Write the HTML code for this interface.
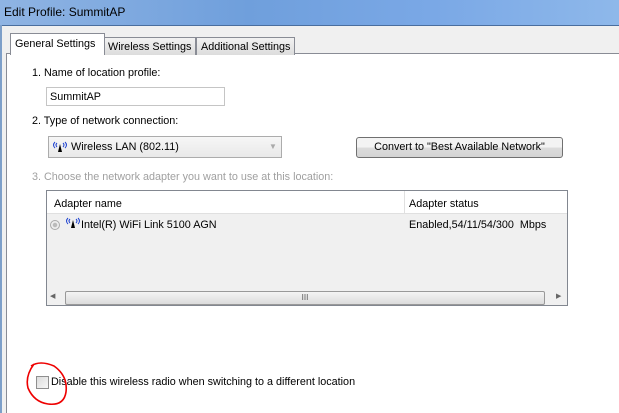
<!DOCTYPE html>
<html><head><style>
html,body{margin:0;width:619px;height:413px;overflow:hidden}
body{background:#f0f0f0;font-family:"Liberation Sans",sans-serif;font-size:10.8px;color:#000;position:relative}
.a{position:absolute;white-space:nowrap}
.title{left:0;top:0;width:619px;height:25px;background:linear-gradient(90deg,#8fb4e3,#6f9fdc 40%,#7aa8e6 70%,#8eb8ea);border-bottom:1px solid #4a6e9e}
.title span{position:absolute;left:4px;top:5px;font-size:12px}
.frame{left:0;top:25px;width:2px;height:388px;background:#7d9fc9}
.panel{left:6px;top:53px;width:620px;height:360px;background:#fff;border-left:1px solid #898c95;border-top:1px solid #898c95}
.tab{height:17px;border:1px solid #898c95;border-bottom:none;background:linear-gradient(#f2f2f2,#dcdcdc);padding:0 4px;line-height:18px}
.in{border:1px solid #c5c5c5;background:#fff}
.g{color:#a0a0a0}
</style></head><body>
<div class="a title"><span>Edit Profile: SummitAP</span></div>
<div class="a frame"></div>
<div class="a panel"></div>
<div class="a tab" style="left:103px;top:37px;width:83px">Wireless Settings</div>
<div class="a tab" style="left:196px;top:37px;width:89px">Additional Settings</div>
<div class="a tab" style="left:10px;top:33px;width:85px;height:21px;background:#fff;line-height:20px;padding-left:4px">General Settings</div>
<div class="a" style="left:32px;top:67px">1. Name of location profile:</div>
<div class="a in" style="left:46px;top:87px;width:177px;height:17px"><span style="position:absolute;left:3px;top:3px">SummitAP</span></div>
<div class="a" style="left:32px;top:115px">2. Type of network connection:</div>
<div class="a in" style="left:48px;top:136px;width:232px;height:20px;background:linear-gradient(#f6f6f6,#e9e9e9);border-color:#acacac">
<svg class="a" style="left:2px;top:3px" width="18" height="12"><path d="M4 2Q1 5 4 8M14 2Q17 5 14 8M6 3Q4 5 6 7M12 3Q14 5 12 7" stroke="#1a3fd0" fill="none" stroke-width="1"/><path d="M9 4L7 12H11Z" fill="#000"/></svg>
<span class="a" style="left:22px;top:4px">Wireless LAN (802.11)</span>
<span class="a" style="left:220px;top:5px;color:#aaa;font-size:8px">▼</span></div>
<div class="a" style="left:356px;top:137px;width:205px;height:19px;border:1px solid #707070;border-radius:3px;background:linear-gradient(#f3f3f3 50%,#dcdcdc 50%,#d4d4d4);text-align:center;line-height:19px">Convert to "Best Available Network"</div>
<div class="a g" style="left:32px;top:171px">3. Choose the network adapter you want to use at this location:</div>
<div class="a" style="left:46px;top:190px;width:520px;height:114px;border:1px solid #828790;background:#f0f0f0">
<div class="a" style="left:0;top:0;width:520px;height:22px;background:#fff;border-bottom:1px solid #e0e0e0"></div>
<div class="a" style="left:357px;top:0;width:1px;height:22px;background:#e0e0e0"></div>
<span class="a" style="left:7px;top:7px">Adapter name</span>
<span class="a" style="left:362px;top:7px">Adapter status</span>
<div class="a" style="left:3px;top:29px;width:8px;height:8px;border:1px solid #aaa;border-radius:50%;background:radial-gradient(#bbb 35%,#eee 45%)"></div>
<svg class="a" style="left:17px;top:25px" width="18" height="12"><path d="M4 2Q1 5 4 8M14 2Q17 5 14 8M6 3Q4 5 6 7M12 3Q14 5 12 7" stroke="#1a3fd0" fill="none"/><path d="M9 4L7 12H11Z" fill="#000"/></svg>
<span class="a" style="left:34px;top:28px">Intel(R) WiFi Link 5100 AGN</span>
<span class="a" style="left:362px;top:28px">Enabled,54/11/54/300&nbsp; Mbps</span>
<div class="a" style="left:0;top:99px;width:520px;height:15px;background:#f0f0f0"></div>
<span class="a" style="left:3px;top:101px;font-size:7px;color:#666">◀</span>
<div class="a" style="left:18px;top:100px;width:478px;height:12px;border:1px solid #999;border-radius:2px;background:linear-gradient(#f4f4f4,#dcdcdc);text-align:center;font-size:8px;line-height:12px;color:#555">III</div>
<span class="a" style="left:509px;top:101px;font-size:7px;color:#666">▶</span>
</div>
<div class="a" style="left:36px;top:376px;width:11px;height:11px;border:1px solid #8f8f8f;background:linear-gradient(135deg,#dcdcdc,#f8f8f8)"></div>
<div class="a" style="left:51px;top:376px">Disable this wireless radio when switching to a different location</div>
<svg class="a" style="left:22px;top:358px" width="52" height="52"><path d="M9 8Q18 2 32 8Q46 18 44 34Q42 48 26 46Q12 44 6 30Q3 18 12 6" stroke="#e00" stroke-width="1.6" fill="none"/></svg>
</body></html>
